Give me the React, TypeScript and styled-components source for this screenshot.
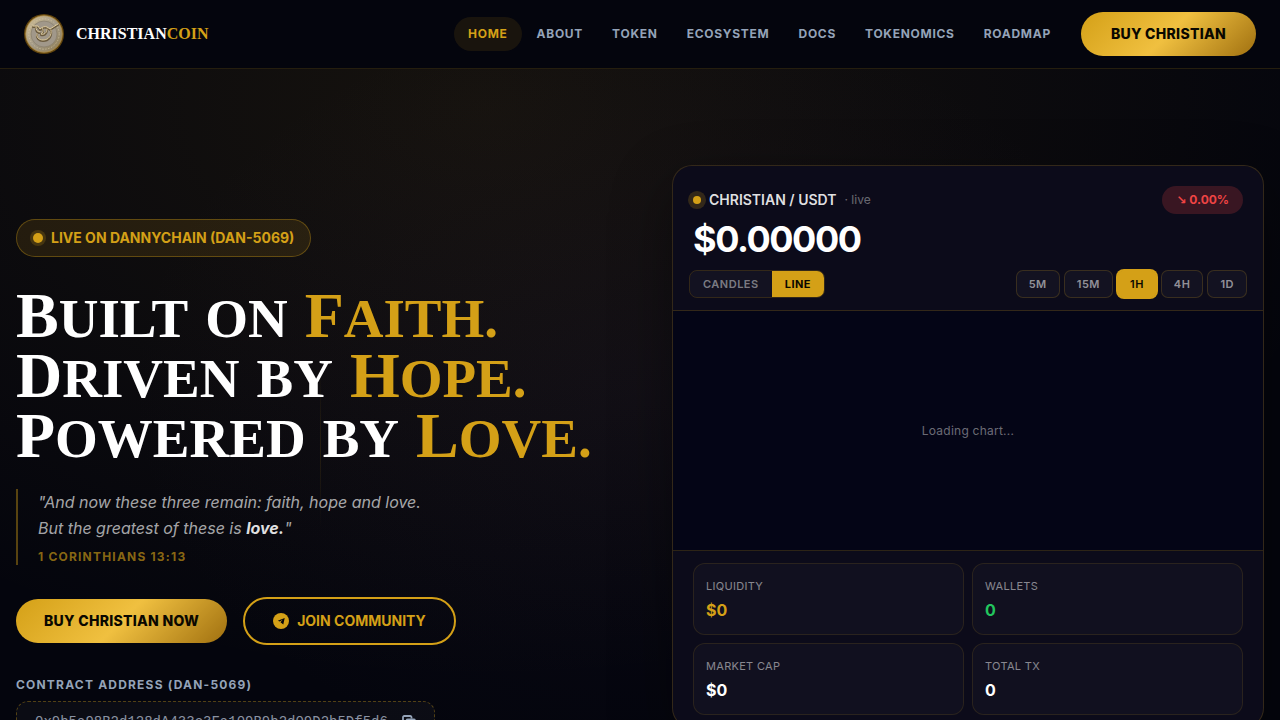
import React from 'react';
import styled, { createGlobalStyle, css } from 'styled-components';

const gold = '#d4a017';
const goldFill = 'linear-gradient(135deg, #d4a017 0%, #f0c040 50%, #a07010 100%)';
const line = 'rgba(212, 160, 23, 0.2)';

const GlobalStyle = createGlobalStyle`
  *, *::before, *::after { box-sizing: border-box; }
  body {
    margin: 0;
    background: #04050d;
    color: #fff;
    font-family: Inter, "Liberation Sans", sans-serif;
    -webkit-font-smoothing: antialiased;
  }
  h1, p, dl, dd, dt, blockquote { margin: 0; }
  button { font-family: inherit; cursor: pointer; }
  a { text-decoration: none; }
`;

const Page = styled.div`
  height: 100vh;
  overflow: hidden;
  display: flex;
  flex-direction: column;
`;

const Header = styled.header`
  flex: none;
  display: flex;
  align-items: center;
  justify-content: space-between;
  padding: 12px 24px;
  background: #04050d;
  border-bottom: 1px solid rgba(212, 160, 23, 0.16);
`;

const Brand = styled.a`
  display: flex;
  align-items: center;
  gap: 12px;
  color: #fff;
  font: 700 16px/24px "Liberation Serif", serif;

  svg { display: block; }
`;

const Gold = styled.span`
  color: ${gold};
`;

const HeaderRight = styled.div`
  display: flex;
  align-items: center;
  gap: 16px;
`;

const Nav = styled.nav`
  display: flex;
  gap: 1px;
`;

const NavLink = styled.a<{ $active?: boolean }>`
  padding: 8px 14px;
  border-radius: 17px;
  font-size: 12px;
  line-height: 18px;
  font-weight: 700;
  letter-spacing: 0.06em;
  color: ${p => (p.$active ? gold : '#94a3b8')};
  background: ${p => (p.$active ? 'rgba(212, 160, 23, 0.1)' : 'transparent')};
`;

const PillButton = styled.button<{ $outline?: boolean; $wide?: boolean }>`
  display: inline-flex;
  align-items: center;
  gap: 8px;
  height: 44px;
  padding: 0 ${p => (p.$wide ? 30 : 28)}px;
  border: 0;
  border-radius: 24px;
  font-size: 14px;
  line-height: 20px;
  font-weight: 800;
  letter-spacing: 0.02em;
  color: #0a0800;
  background: ${goldFill};
  ${p => p.$outline && css`
    height: 48px;
    border: 2px solid ${gold};
    font-weight: 700;
    letter-spacing: normal;
    color: ${gold};
    background: transparent;
  `}
`;

const Hero = styled.main`
  position: relative;
  flex: 1;
  display: grid;
  grid-template-columns: 1fr 1fr;
  align-items: start;
  gap: 64px;
  padding: 96px 16px;
  background:
    radial-gradient(ellipse 70% 75% at 38% 5%, rgba(212, 160, 23, 0.085), transparent 100%),
    radial-gradient(ellipse 40% 50% at 50% 42%, rgba(70, 50, 110, 0.09), transparent 100%),
    #04050d;
`;

const Beam = styled.span`
  position: absolute;
  left: 25%;
  top: 300px;
  width: 1px;
  height: 160px;
  background: linear-gradient(transparent, rgba(212, 160, 23, 0.12), transparent);
`;

const Intro = styled.section`
  position: relative;
  display: flex;
  flex-direction: column;
  align-items: flex-start;
  padding-top: 54px;
`;

const Badge = styled.p`
  display: flex;
  align-items: center;
  gap: 8px;
  padding: 8px 16px;
  border: 1px solid rgba(212, 160, 23, 0.35);
  border-radius: 19px;
  background: rgba(212, 160, 23, 0.12);
  color: ${gold};
  font-size: 14px;
  line-height: 20px;
  font-weight: 700;
`;

const Dot = styled.span<{ $size: number; $ring: number }>`
  flex: none;
  width: ${p => p.$size}px;
  height: ${p => p.$size}px;
  border-radius: 50%;
  background: ${gold};
  box-shadow: 0 0 0 ${p => p.$ring}px rgba(212, 160, 23, 0.2);
`;

const Title = styled.h1`
  margin-top: 29px;
  font: 700 55px/60px "Liberation Serif", serif;
  text-transform: uppercase;
`;

const TitleLine = styled.span`
  display: flex;
  align-items: baseline;
  gap: 17px;
  height: 60px;
`;

const Word = styled.span<{ $gold?: boolean; $cap?: boolean }>`
  display: block;
  color: ${p => (p.$gold ? gold : '#fff')};
  ${p => p.$cap && css`
    &::first-letter { font-size: 64px; }
  `}
`;

const Verse = styled.blockquote`
  margin-top: 23px;
  padding-left: 20px;
  border-left: 2px solid rgba(212, 160, 23, 0.4);
  color: rgba(255, 255, 255, 0.65);
  font-size: 16px;
  line-height: 26px;
  font-style: italic;

  strong { color: rgba(255, 255, 255, 0.88); }
  cite {
    display: block;
    padding-top: 8px;
    font-size: 12px;
    line-height: 16px;
    font-style: normal;
    font-weight: 700;
    letter-spacing: 0.1em;
    color: rgba(212, 160, 23, 0.65);
  }
`;

const Actions = styled.div`
  display: flex;
  align-items: center;
  gap: 16px;
  margin-top: 32px;
`;

const ContractLabel = styled.p`
  margin-top: 30px;
  font-size: 12px;
  line-height: 20px;
  font-weight: 700;
  letter-spacing: 0.1em;
  color: #94a3b8;
`;

const Contract = styled.div`
  display: flex;
  align-items: center;
  gap: 14px;
  margin-top: 6px;
  padding: 10px 18px;
  border: 1px dashed rgba(212, 160, 23, 0.35);
  border-radius: 12px;
  background: rgba(255, 255, 255, 0.03);
  color: #8b93a3;
  font: 14px/20px "Liberation Mono", monospace;
`;

const IconButton = styled.button`
  display: flex;
  padding: 0;
  border: 0;
  background: none;
  color: #94a3b8;
`;

const Card = styled.section`
  position: relative;
  overflow: hidden;
  border: 1px solid ${line};
  border-radius: 20px;
  background: #0c0b1a;
  box-shadow: 0 20px 60px rgba(0, 0, 0, 0.4);
`;

const CardHead = styled.div`
  padding: 20px 20px 0;
`;

const Row = styled.div`
  display: flex;
  align-items: center;
  justify-content: space-between;
`;

const Pair = styled.h2`
  display: flex;
  align-items: center;
  gap: 8px;
  margin: 0;
  font-size: 14px;
  line-height: 20px;
  font-weight: 600;
  color: rgba(255, 255, 255, 0.88);

  small {
    font-size: 12px;
    font-weight: 400;
    color: rgba(255, 255, 255, 0.4);
  }
`;

const Change = styled.span`
  padding: 4px 14px;
  border-radius: 14px;
  background: rgba(239, 68, 68, 0.2);
  color: #ef4444;
  font-size: 12px;
  line-height: 20px;
  font-weight: 700;
`;

const Arrow = styled.span`
  font-family: "DejaVu Sans", sans-serif;
  line-height: 1;
`;

const Price = styled.p`
  padding: 3px 0 5px;
  font-size: 36px;
  line-height: 44px;
  font-weight: 700;
  letter-spacing: -0.04em;
`;

const Controls = styled(Row)`
  padding: 4px 16px 12px;
  border-bottom: 1px solid ${line};
`;

const Toggle = styled.div`
  display: flex;
  overflow: hidden;
  border: 1px solid ${line};
  border-radius: 8px;
`;

const ToggleButton = styled.button<{ $on?: boolean }>`
  height: 26px;
  padding: 0 13px;
  border: 0;
  font-size: 11px;
  font-weight: ${p => (p.$on ? 700 : 600)};
  letter-spacing: 0.5px;
  color: ${p => (p.$on ? '#0a0800' : 'rgba(255, 255, 255, 0.45)')};
  background: ${p => (p.$on ? gold : 'rgba(255, 255, 255, 0.03)')};
`;

const Frames = styled.div`
  display: flex;
  gap: 4px;
`;

const FrameButton = styled.button<{ $on?: boolean }>`
  height: 28px;
  padding: 0 12px;
  border: 1px solid ${p => (p.$on ? gold : line)};
  border-radius: 7px;
  font-size: 11px;
  font-weight: 600;
  letter-spacing: 0.5px;
  color: ${p => (p.$on ? '#0a0800' : 'rgba(255, 255, 255, 0.55)')};
  background: ${p => (p.$on ? gold : 'rgba(255, 255, 255, 0.03)')};
  box-shadow: ${p => (p.$on ? `0 0 0 1px ${gold}` : 'none')};
`;

const Chart = styled.div`
  display: flex;
  align-items: center;
  justify-content: center;
  height: 240px;
  border-bottom: 1px solid ${line};
  background: #040516;
  color: rgba(255, 255, 255, 0.42);
  font-size: 12px;
  line-height: 20px;
  letter-spacing: 0.02em;
`;

const Stats = styled.dl`
  display: grid;
  grid-template-columns: 1fr 1fr;
  gap: 8px;
  padding: 12px 20px;
`;

const Stat = styled.div<{ $tone?: string }>`
  padding: 12px;
  border: 1px solid rgba(212, 160, 23, 0.13);
  border-radius: 12px;
  background: rgba(255, 255, 255, 0.025);

  dt {
    font-size: 11px;
    line-height: 20px;
    letter-spacing: 0.3px;
    color: rgba(255, 255, 255, 0.5);
  }
  dd {
    padding-top: 2px;
    font-size: 16px;
    line-height: 24px;
    font-weight: 700;
    color: ${p => p.$tone ?? '#fff'};
  }
`;

const CoinLogo = () => (
  <svg width="40" height="40" viewBox="0 0 40 40" aria-hidden="true">
    <defs>
      <linearGradient id="coin" x1="0" y1="0" x2="1" y2="1">
        <stop offset="0" stopColor="#d2bf92" />
        <stop offset="0.5" stopColor="#a39a88" />
        <stop offset="1" stopColor="#8d7a4e" />
      </linearGradient>
    </defs>
    <circle cx="20" cy="20" r="20" fill="#5f430d" />
    <circle cx="20" cy="20" r="18.3" fill="url(#coin)" stroke="#b08d45" strokeWidth="0.8" />
    <circle cx="20" cy="20" r="15.2" fill="none" stroke="#d9cba8" strokeWidth="1" strokeDasharray="1.5 1.5" opacity="0.6" />
    <circle cx="20" cy="20" r="13" fill="#a1988a" stroke="#857a66" strokeWidth="0.6" />
    <g fill="none" strokeLinecap="round" strokeLinejoin="round">
      <path d="M9 13h5l2 3c2-2 5-3 7-2l3 2 8-5M12 14c0 3 1 5 4 5M27 17c1 5-2 10-8 10-4 0-7-3-6-6M18 15c2 2 1 5-1 6 3 1 6-1 6-5" stroke="#6a5a3e" strokeWidth="2" />
      <path d="M9 12h5l2 3c2-2 5-3 7-2l3 2 8-5M12 13c0 3 1 5 4 5M27 16c1 5-2 10-8 10-4 0-7-3-6-6M18 14c2 2 1 5-1 6 3 1 6-1 6-5" stroke="#e0cda0" strokeWidth="1" />
    </g>
  </svg>
);

const TelegramIcon = () => (
  <svg width="16" height="16" viewBox="0 0 16 16" aria-hidden="true">
    <circle cx="8" cy="8" r="8" fill={gold} />
    <path d="M11.700 4.900 4.800 7.700l2 .8 3-2-2.300 2.700 2.800 2.200z" fill="#05060e" />
  </svg>
);

const CopyIcon = () => (
  <svg width="14" height="14" viewBox="0 0 14 14" fill="none" stroke="currentColor" strokeWidth="1.8" aria-hidden="true">
    <path d="M3.500 9.500H2.300A1.300 1.300 0 0 1 1 8.200V2.300A1.300 1.300 0 0 1 2.300 1h5.900a1.300 1.300 0 0 1 1.300 1.300v1.200" />
    <rect x="4.500" y="4.500" width="8.500" height="8.500" rx="1.300" />
  </svg>
);

const navItems = ['HOME', 'ABOUT', 'TOKEN', 'ECOSYSTEM', 'DOCS', 'TOKENOMICS', 'ROADMAP'];
const titleLines = [['Built', 'on', 'Faith.'], ['Driven', 'by', 'Hope.'], ['Powered', 'by', 'Love.']];
const frames = ['5M', '15M', '1H', '4H', '1D'];
const stats = [
  { label: 'LIQUIDITY', value: '$0', tone: gold },
  { label: 'WALLETS', value: '0', tone: '#22c55e' },
  { label: 'MARKET CAP', value: '$0' },
  { label: 'TOTAL TX', value: '0' },
];

export default function App() {
  return (
    <Page>
      <GlobalStyle />
      <Header>
        <Brand href="#home">
          <CoinLogo />
          <span>CHRISTIAN<Gold>COIN</Gold></span>
        </Brand>
        <HeaderRight>
          <Nav>
            {navItems.map((item, i) => (
              <NavLink key={item} href={`#${item.toLowerCase()}`} $active={i === 0}>{item}</NavLink>
            ))}
          </Nav>
          <PillButton $wide>BUY CHRISTIAN</PillButton>
        </HeaderRight>
      </Header>
      <Hero>
        <Beam />
        <Intro>
          <Badge><Dot $size={10} $ring={3} />LIVE ON DANNYCHAIN (DAN-5069)</Badge>
          <Title>
            {titleLines.map(words => (
              <TitleLine key={words[2]}>
                {words.map((word, i) => (
                  <Word key={word} $cap={i !== 1} $gold={i === 2}>{word}</Word>
                ))}
              </TitleLine>
            ))}
          </Title>
          <Verse>
            "And now these three remain: faith, hope and love.<br />
            But the greatest of these is <strong>love.</strong>"
            <cite>1 CORINTHIANS 13:13</cite>
          </Verse>
          <Actions>
            <PillButton>BUY CHRISTIAN NOW</PillButton>
            <PillButton $outline><TelegramIcon />JOIN COMMUNITY</PillButton>
          </Actions>
          <ContractLabel>CONTRACT ADDRESS (DAN-5069)</ContractLabel>
          <Contract>
            <span>0x9b5a98B2d128dA433c3Fa109B9b2d09D2b5Df5d6</span>
            <IconButton aria-label="Copy address"><CopyIcon /></IconButton>
          </Contract>
        </Intro>
        <Card>
          <CardHead>
            <Row>
              <Pair><Dot $size={8} $ring={5} />CHRISTIAN / USDT <small>· live</small></Pair>
              <Change><Arrow>↘</Arrow> 0.00%</Change>
            </Row>
            <Price>$0.00000</Price>
          </CardHead>
          <Controls>
            <Toggle>
              <ToggleButton>CANDLES</ToggleButton>
              <ToggleButton $on>LINE</ToggleButton>
            </Toggle>
            <Frames>
              {frames.map(f => <FrameButton key={f} $on={f === '1H'}>{f}</FrameButton>)}
            </Frames>
          </Controls>
          <Chart>Loading chart...</Chart>
          <Stats>
            {stats.map(s => (
              <Stat key={s.label} $tone={s.tone}>
                <dt>{s.label}</dt>
                <dd>{s.value}</dd>
              </Stat>
            ))}
          </Stats>
        </Card>
      </Hero>
    </Page>
  );
}
